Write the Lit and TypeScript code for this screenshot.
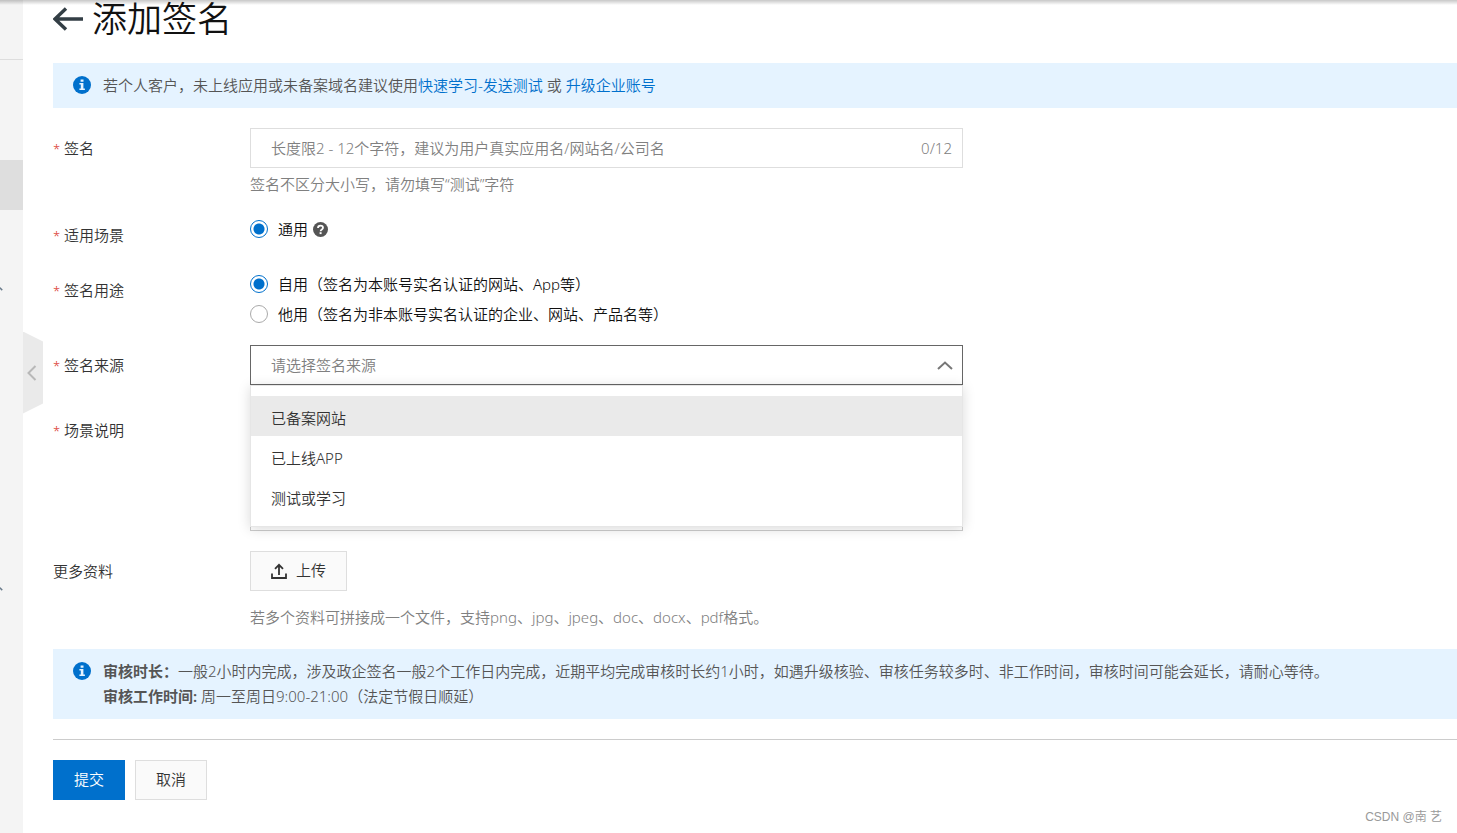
import { LitElement, html, css, svg } from "lit";
import { customElement, state } from "lit/decorators.js";

const infoIcon = html`<svg class="info" viewBox="0 0 18 18" aria-hidden="true">
  <circle cx="9" cy="9" r="9" fill="#0070cc" />
  <path d="M7.600 3.400h2.900v2.400H7.600zM6.400 7h4v5.600h1.500V14H6.400v-1.400h1.400V8.400H6.400z" fill="#e5f3ff" />
</svg>`;

const caret = svg`<path d="M1 8 8 1.500l7 6.500" fill="none" stroke="currentColor" stroke-width="2" />`;

@customElement("app-root")
export class AppRoot extends LitElement {
  @state() private name = "";
  @state() private usage = "self";
  @state() private open = true;
  @state() private source = "";

  private readonly sources = ["已备案网站", "已上线APP", "测试或学习"];
  private readonly navItems = ["", "", "active", "", "group", "", "", "", "", "", "group", "", "", "", ""];

  static styles = css`
    :host {
      display: flex;
      position: relative;
      min-height: 100vh;
      overflow: hidden;
      background: #fff;
      color: #333;
      font-family: "Noto Sans", "Noto Sans CJK SC", sans-serif;
      font-size: 15px;
      font-weight: 350;
      line-height: 25px;
    }
    * {
      box-sizing: border-box;
    }
    button, input, select, textarea {
      font: inherit;
      color: inherit;
      margin: 0;
      border-radius: 0;
    }
    .top-shadow {
      position: absolute;
      inset: 0 0 auto 0;
      height: 5px;
      background: linear-gradient(rgba(0, 0, 0, 0.22), rgba(0, 0, 0, 0));
      pointer-events: none;
    }
    .sidebar {
      flex: 0 0 23px;
      height: 100vh;
      overflow: hidden;
      background: #f4f4f4;
    }
    .sidebar-head {
      height: 60px;
      border-bottom: 1px solid #ddd;
    }
    .nav-item {
      display: flex;
      align-items: center;
      height: 50px;
      color: #6b7c8c;
    }
    .nav-item.active {
      background: #dedede;
    }
    .nav-item svg {
      width: 12px;
      height: 7px;
      margin-left: -9px;
      margin-top: 4px;
    }
    .main {
      flex: 1;
      min-width: 0;
      padding-left: 30px;
    }
    .collapse {
      position: absolute;
      left: 23px;
      top: calc(50vh - 85px);
      width: 20px;
      height: 82px;
      padding: 0;
      border: 0;
      background: #eaeaea;
      clip-path: polygon(0 0, 100% 10px, 100% 72px, 0 100%);
      color: #b8b8b8;
    }
    .collapse svg {
      display: block;
      width: 10px;
      height: 16px;
      margin-left: 4px;
    }
    .title {
      display: flex;
      align-items: center;
      gap: 9px;
      height: 38px;
      margin: 0 0 25px;
      color: #111;
      font-size: 35px;
      font-weight: 350;
      line-height: 38px;
    }
    .back {
      display: flex;
      color: #333e45;
    }
    .back svg {
      width: 30px;
      height: 24px;
    }
    .notice {
      display: flex;
      gap: 12px;
      padding: 10px 20px;
      background: #e5f3ff;
      color: #555;
    }
    .notice p {
      margin: 0;
    }
    .notice b {
      font-weight: 600;
    }
    .notice a {
      color: #0070cc;
      text-decoration: none;
    }
    .info {
      flex: none;
      width: 18px;
      height: 18px;
      margin-top: 3px;
    }
    .form {
      display: grid;
      gap: 15px;
      padding: 20px 0 16px;
    }
    .row {
      display: grid;
      grid-template-columns: 197px minmax(0, 713px);
    }
    .label {
      line-height: 40px;
    }
    .req::before {
      content: "*";
      display: inline-block;
      width: 11px;
      color: #d93026;
      font-size: 13px;
      line-height: 20px;
    }
    .field {
      position: relative;
    }
    .field.spaced {
      padding-bottom: 10px;
    }
    .text-box {
      display: flex;
      align-items: center;
      height: 40px;
      padding: 0 10px 0 20px;
      border: 1px solid #dedede;
      color: #808080;
    }
    .text-box input {
      flex: 1;
      min-width: 0;
      padding: 0;
      border: 0;
      outline: 0;
      background: none;
      color: #333;
    }
    ::placeholder {
      color: #808080;
      opacity: 1;
    }
    .help {
      margin: 0;
      color: #808080;
      line-height: 32px;
    }
    .help.apart {
      margin-top: 10px;
    }
    .radio {
      display: flex;
      align-items: center;
      height: 30px;
      padding-bottom: 2px;
      color: #111;
    }
    .radio input {
      appearance: none;
      width: 18px;
      height: 18px;
      margin-right: 10px;
      border: 1px solid #aaa;
      border-radius: 50%;
      background: #fff;
    }
    .radio input:checked {
      border-color: #0070cc;
      background: radial-gradient(circle, #0070cc 5px, #fff 6px);
    }
    .radio svg {
      width: 15px;
      height: 15px;
      margin-left: 5px;
    }
    .select {
      display: block;
      width: 100%;
      height: 40px;
      padding: 0 40px 0 20px;
      border: 1px solid #666;
      outline: 0;
      appearance: none;
      background: #fff;
      color: #808080;
    }
    .caret {
      position: absolute;
      right: 10px;
      top: 16px;
      width: 16px;
      height: 9px;
      color: #777;
      pointer-events: none;
    }
    .menu {
      position: absolute;
      z-index: 2;
      top: 40px;
      left: 0;
      right: 0;
      margin: 0;
      padding: 10px 0;
      list-style: none;
      background: #fff;
      border: 1px solid #e6e6e6;
      box-shadow: 0 2px 12px rgba(0, 0, 0, 0.15);
    }
    .menu li {
      height: 40px;
      padding: 2px 20px 0;
      line-height: 40px;
      cursor: pointer;
    }
    .menu li:first-child, .menu li:hover {
      background: #eaeaea;
    }
    .area {
      display: block;
      width: 100%;
      height: 121px;
      margin-bottom: 5px;
      padding: 8px 20px;
      border: 1px solid #ccc;
      outline: 0;
      resize: none;
    }
    .btn {
      display: inline-flex;
      align-items: center;
      gap: 9px;
      height: 40px;
      padding: 0 20px 2px;
      border: 1px solid #dedede;
      background: #fafafa;
      color: #333;
    }
    .btn svg {
      width: 16px;
      height: 16px;
      margin-top: 2px;
    }
    .btn.primary {
      border-color: #0070cc;
      background: #0070cc;
      color: #fff;
    }
    .actions {
      display: flex;
      gap: 10px;
      margin-top: 20px;
      padding: 20px 0;
      border-top: 1px solid #ccc;
    }
    .watermark {
      position: absolute;
      right: 15px;
      bottom: 3px;
      color: #999;
      font-family: "Liberation Sans", "Noto Sans CJK SC", sans-serif;
      font-size: 12px;
    }
  `;

  private pick(value: string) {
    this.source = value;
    this.open = false;
  }

  render() {
    return html`
      <nav class="sidebar">
        <div class="sidebar-head"></div>
        ${this.navItems.map(
          (kind) => html`<div class="nav-item ${kind}">
            ${kind === "group" ? html`<svg viewBox="0 0 16 9">${caret}</svg>` : ""}
          </div>`
        )}
      </nav>
      <button class="collapse" aria-label="收起">
        <svg viewBox="0 0 10 16"><path d="M8.500 1 1.500 8l7 7" fill="none" stroke="currentColor" stroke-width="2" /></svg>
      </button>
      <main class="main">
        <h1 class="title">
          <a class="back" href="#">
            <svg viewBox="0 0 30 24">
              <path d="M30 12H2M13 1.500 2 12l11 10.500" fill="none" stroke="currentColor" stroke-width="3.400" />
            </svg>
          </a>
          添加签名
        </h1>
        <div class="notice">
          ${infoIcon}
          <p>若个人客户，未上线应用或未备案域名建议使用<a href="#">快速学习-发送测试</a> 或 <a href="#">升级企业账号</a></p>
        </div>
        <form class="form" @submit=${(e: Event) => e.preventDefault()}>
          <div class="row">
            <label class="label req" for="name">签名</label>
            <div class="field">
              <div class="text-box">
                <input id="name" maxlength="12" placeholder="长度限2 - 12个字符，建议为用户真实应用名/网站名/公司名"
                  .value=${this.name} @input=${(e: Event) => (this.name = (e.target as HTMLInputElement).value)} />
                <span>${this.name.length}/12</span>
              </div>
              <p class="help">签名不区分大小写，请勿填写“测试”字符</p>
            </div>
          </div>
          <div class="row">
            <span class="label req">适用场景</span>
            <div class="field">
              <label class="radio">
                <input type="radio" name="scene" checked />通用
                <svg viewBox="0 0 15 15">
                  <circle cx="7.500" cy="7.500" r="7.500" fill="#555" />
                  <path d="M5 6.100C5 4.500 6.100 3.700 7.500 3.700s2.500.8 2.500 2.100c0 1.700-2.400 1.700-2.400 3.500" fill="none" stroke="#fff" stroke-width="1.800" />
                  <path d="M6.600 10.200h2v1.900h-2z" fill="#fff" />
                </svg>
              </label>
            </div>
          </div>
          <div class="row">
            <span class="label req">签名用途</span>
            <div class="field">
              <label class="radio">
                <input type="radio" name="usage" .checked=${this.usage === "self"} @change=${() => (this.usage = "self")} />自用（签名为本账号实名认证的网站、App等）
              </label>
              <label class="radio">
                <input type="radio" name="usage" .checked=${this.usage === "other"} @change=${() => (this.usage = "other")} />他用（签名为非本账号实名认证的企业、网站、产品名等）
              </label>
            </div>
          </div>
          <div class="row">
            <label class="label req" for="source">签名来源</label>
            <div class="field spaced">
              <select class="select" id="source"
                @mousedown=${(e: Event) => { e.preventDefault(); this.open = !this.open; }}>
                <option>${this.source || "请选择签名来源"}</option>
              </select>
              <svg class="caret" viewBox="0 0 16 9">${caret}</svg>
              ${this.open
                ? html`<ul class="menu" role="listbox">
                    ${this.sources.map((s) => html`<li role="option" @click=${() => this.pick(s)}>${s}</li>`)}
                  </ul>`
                : ""}
            </div>
          </div>
          <div class="row">
            <label class="label req" for="detail">场景说明</label>
            <div class="field"><textarea class="area" id="detail"></textarea></div>
          </div>
          <div class="row">
            <span class="label">更多资料</span>
            <div class="field">
              <button class="btn" type="button">
                <svg viewBox="0 0 16 16">
                  <path d="M8 12V2M4 5.800 8 1.800l4 4M1 10.500V15h14v-4.500" fill="none" stroke="currentColor" stroke-width="1.800" />
                </svg>
                上传
              </button>
              <p class="help apart">若多个资料可拼接成一个文件，支持png、jpg、jpeg、doc、docx、pdf格式。</p>
            </div>
          </div>
        </form>
        <div class="notice">
          ${infoIcon}
          <p>
            <b>审核时长：</b>一般2小时内完成，涉及政企签名一般2个工作日内完成，近期平均完成审核时长约1小时，如遇升级核验、审核任务较多时、非工作时间，审核时间可能会延长，请耐心等待。<br />
            <b>审核工作时间:</b> 周一至周日9:00-21:00（法定节假日顺延）
          </p>
        </div>
        <div class="actions">
          <button class="btn primary">提交</button>
          <button class="btn">取消</button>
        </div>
      </main>
      <div class="top-shadow"></div>
      <div class="watermark">CSDN @南 艺</div>
    `;
  }
}
